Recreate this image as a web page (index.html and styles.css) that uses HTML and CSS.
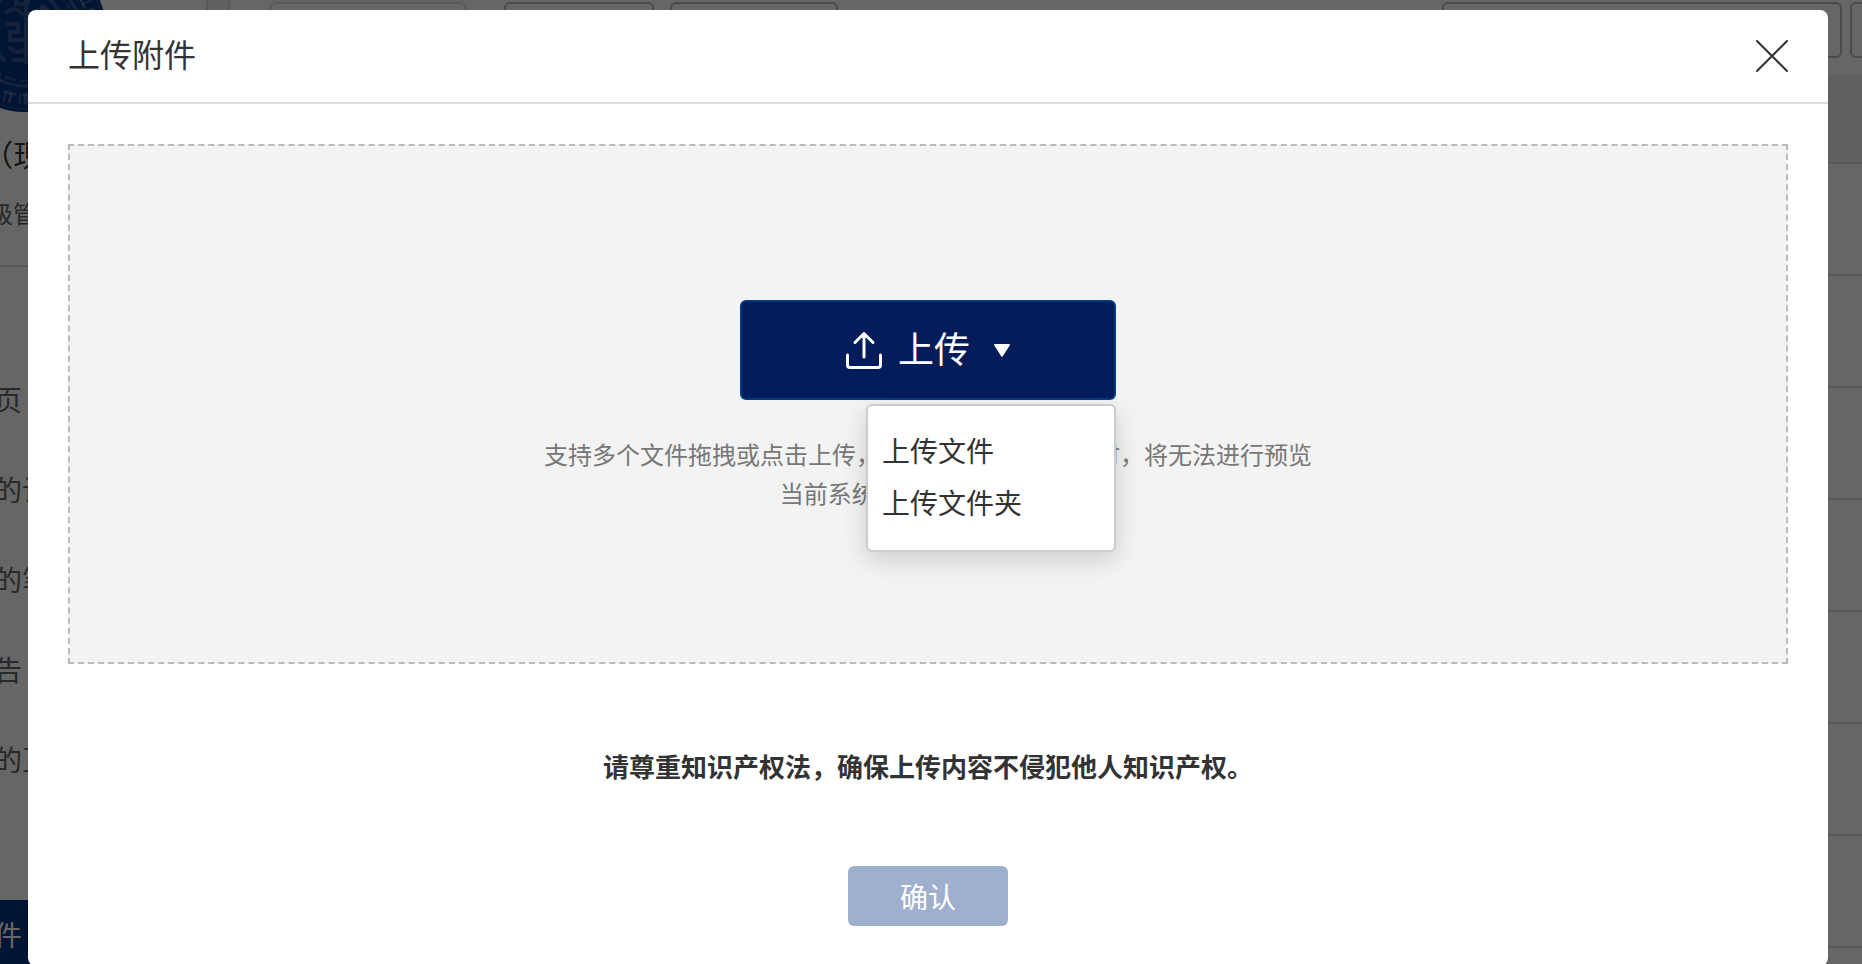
FILE: index.html
```html
<!DOCTYPE html>
<html lang="zh-CN">
<head>
  <meta charset="UTF-8">
  <meta name="viewport" content="width=device-width, initial-scale=1.0">
  <title>上传附件</title>
  <link rel="stylesheet" href="styles.css">
</head>
<body>

  <div class="app" inert>
    <aside class="sidebar">
      <div class="profile">
        <svg class="avatar" viewBox="0 0 162 162" aria-hidden="true">
          <circle cx="81" cy="81" r="81" fill="#003282"/>
          <g fill="none" stroke="#7f8fae" stroke-linecap="round">
            <circle cx="81" cy="81" r="78" stroke-width="1" opacity=".4"/>
            <circle cx="81" cy="81" r="68" stroke-width="11" stroke-linecap="butt" stroke-dasharray="3 3 2 6 4 3 2 7" opacity=".5"/>
            <circle cx="81" cy="81" r="64" stroke-width="3" stroke-dasharray="6 9 10 7" opacity=".5"/>
            <circle cx="81" cy="81" r="55" stroke-width="3" opacity=".45"/>
            <circle cx="81" cy="81" r="50" stroke-width="3" stroke-dasharray="4 7 9 6" opacity=".35"/>
            <path d="M62 46h10v8h12v-8h12M62 62q8-6 14 0t14 0t14 0M64 74h10v8h-8v8h12M86 72h14v10h-14v10h16M66 98q8 8 16 0t18 2M70 110h24M82 46v66" stroke-width="4" opacity=".4"/>
            <path d="M104 48q14 10 10 28M108 84q8 8 2 20M114 58q10 20 2 40M98 56q10 4 6 16M104 92l10 12" stroke-width="4" opacity=".4"/>
            <path d="M56 50q-12 12-8 30M54 90q-4 10 6 20" stroke-width="4" opacity=".4"/>
          </g>
        </svg>
        <div class="profile-name">王 （现任）</div>
        <div class="profile-role">超级管理员</div>
      </div>
      <nav class="nav">
        <a class="nav-item" href="#">首页</a>
        <a class="nav-item" href="#">我的计划</a>
        <a class="nav-item" href="#">我的笔记</a>
        <a class="nav-item" href="#">公告</a>
        <a class="nav-item" href="#">我的互动</a>
      </nav>
      <a class="nav-item nav-active" href="#">文件</a>
    </aside>

    <main class="content">
      <div class="toolbar">
        <button class="tool tool-primary" type="button" aria-label="新建" disabled></button>
        <button class="tool tool-move" type="button" aria-label="移动"></button>
        <button class="tool tool-download" type="button" aria-label="下载"></button>
        <input class="tool tool-search" type="text" aria-label="搜索">
        <button class="tool tool-filter" type="button" aria-label="筛选"></button>
      </div>
      <div class="list">
        <div class="list-head"></div>
        <div class="list-row"></div>
        <div class="list-row"></div>
        <div class="list-row"></div>
        <div class="list-row"></div>
        <div class="list-row"></div>
        <div class="list-row"></div>
        <div class="list-row"></div>
        <div class="list-row"></div>
      </div>
    </main>
  </div>

  <div class="overlay">
    <div class="modal" role="dialog" aria-modal="true" aria-labelledby="modalTitle">
      <div class="modal-header">
        <h1 class="modal-title" id="modalTitle">上传附件</h1>
        <button class="close" type="button" aria-label="关闭">
          <svg width="32" height="32" viewBox="0 0 32 32" fill="none" stroke="#333" stroke-width="2" stroke-linecap="round">
            <path d="M1 1l30 30M31 1L1 31"/>
          </svg>
        </button>
      </div>

      <div class="modal-body">
        <div class="dropzone">
          <div class="upload">
            <button class="upload-btn" type="button" aria-haspopup="true" aria-expanded="true">
              <svg class="upload-icon" width="36" height="38" viewBox="0 0 36 38" fill="none" stroke="#fff" stroke-width="3" stroke-linecap="round" stroke-linejoin="round">
                <path d="M1.500 24v10q0 2.500 2.500 2.500h28q2.500 0 2.500-2.500V24M18 26V3M9 11.500l9-9 9 9"/>
              </svg>
              <span class="upload-text">上传</span>
              <svg class="caret" width="16" height="13" viewBox="0 0 16 13" fill="#fff">
                <path d="M1 0h14q1.500 0 .8 1.200l-7 11q-.8 1-1.600 0l-7-11Q-.5 0 1 0z"/>
              </svg>
            </button>
            <div class="menu">
              <button class="menu-item" type="button">上传文件</button>
              <button class="menu-item" type="button">上传文件夹</button>
            </div>
          </div>
          <p class="hint">支持多个文件拖拽或点击上传，若单个文件大小过大时，将无法进行预览<br>当前系统支持最大上传100G</p>
        </div>
        <p class="notice">请尊重知识产权法，确保上传内容不侵犯他人知识产权。</p>
        <button class="confirm" type="button" disabled>确认</button>
      </div>
    </div>
  </div>

</body>
</html>
```
FILE: styles.css
```css
* { box-sizing: border-box; }
body { margin: 0; overflow: hidden; color: #333; font-family: "Noto Sans CJK SC", sans-serif; }
button { padding: 0; border: none; background: none; color: inherit; font-family: inherit; cursor: pointer; }
p, h1 { margin: 0; }

/* page behind the dialog */
.app { display: flex; height: 100vh; overflow: hidden; background: #f2f2f2; }
.sidebar { flex: none; width: 364px; margin-left: -156px; border-right: 2px solid #ddd; background: #fff; }
.profile { display: flex; flex-direction: column; align-items: center; height: 267px; border-bottom: 2px solid #ddd; }
.avatar { flex: none; width: 162px; height: 162px; margin-top: -50px; }
.profile-name { margin-top: 19px; font-size: 30px; line-height: 44px; }
.profile-role { margin-top: 20px; color: #666; font-size: 24px; line-height: 36px; }
.nav { height: 633px; padding-top: 87px; }
.nav-item { display: block; height: 90px; padding-left: 122px; color: #666; font-size: 28px; line-height: 90px; text-decoration: none; }
.nav-active { height: 68px; background: #003282; color: #fff; line-height: 68px; }

.content { flex: 1; margin-left: 20px; border-left: 2px solid #ddd; background: #fff; }
.toolbar { display: flex; height: 74px; padding: 2px 0 0 40px; overflow: hidden; }
.tool { flex: none; height: 56px; border: 2px solid #bbb; border-radius: 6px; background: #fff; }
.tool-primary { width: 196px; border-color: #e4e4e4; }
.tool-move { width: 150px; margin-left: 38px; }
.tool-download { width: 168px; margin-left: 16px; }
.tool-search { width: 400px; margin-left: auto; }
.tool-filter { width: 56px; margin: 0 -44px 0 8px; }
.list-head { height: 90px; border-bottom: 2px solid #ddd; background: #f0f0f0; }
.list-row { height: 112px; border-bottom: 2px solid #ddd; }

/* dialog */
.overlay { position: fixed; inset: 0; padding: 10px 34px 0 28px; overflow: hidden; background: rgba(0, 0, 0, 0.6); }
.modal { border-radius: 8px; background: #fff; }
.modal-header { display: flex; align-items: center; justify-content: space-between; height: 94px; padding: 0 40px; border-bottom: 2px solid #ddd; }
.modal-title { padding-bottom: 6px; font-size: 32px; font-weight: 400; line-height: 48px; }
.close { display: flex; }
.modal-body { display: flex; flex-direction: column; align-items: center; padding: 40px; }

.dropzone { display: flex; flex-direction: column; align-items: center; width: 100%; padding: 154px 0 150px; border: 2px dashed #bbb; background: #f3f3f3; }
.upload { position: relative; }
.upload-btn { display: flex; align-items: center; justify-content: center; width: 376px; height: 100px; border: 2px solid #003b82; border-radius: 6px; background: #041c5a; color: #fff; font-size: 36px; line-height: 52px; }
.upload-icon { margin-right: 16px; }
.upload-text { padding-bottom: 6px; }
.caret { margin-left: 24px; }
.menu { position: absolute; top: 104px; right: 0; width: 250px; padding: 18px 0 22px; border: 2px solid #ccc; border-radius: 6px; background: #fff; box-shadow: 0 8px 24px rgba(0, 0, 0, 0.16); }
.menu-item { display: block; width: 100%; padding-left: 14px; font-size: 28px; line-height: 52px; text-align: left; }
.hint { margin-top: 34px; color: #777; font-size: 24px; line-height: 39px; text-align: center; }

.notice { margin-top: 82px; font-size: 26px; font-weight: 700; line-height: 40px; }
.confirm { width: 160px; height: 60px; margin-top: 80px; border-radius: 6px; background: #9fb0cf; color: #fff; font-size: 28px; line-height: 40px; }
```
